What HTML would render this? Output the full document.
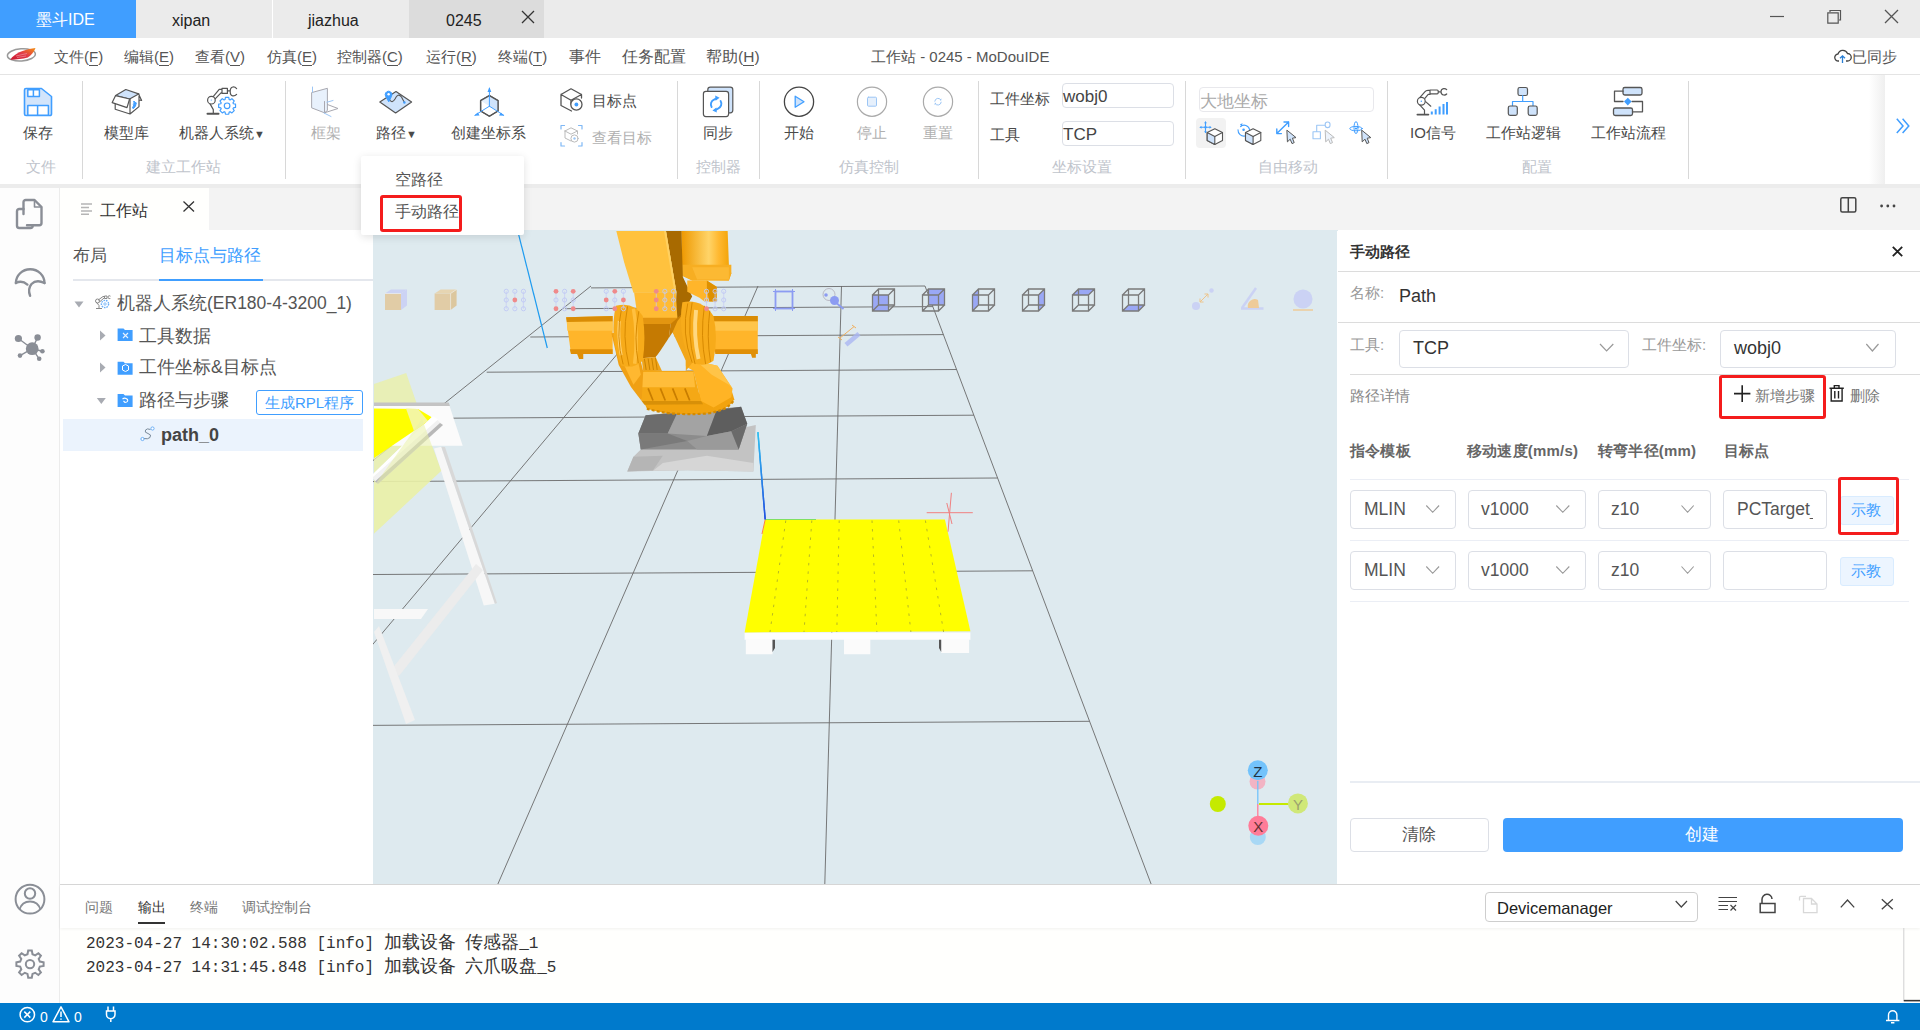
<!DOCTYPE html>
<html><head><meta charset="utf-8">
<style>
*{box-sizing:border-box;margin:0;padding:0}
html,body{width:1920px;height:1030px;overflow:hidden;background:#fff;font-family:"Liberation Sans",sans-serif;color:#303133}
.a{position:absolute}
.t{position:absolute;white-space:nowrap;line-height:1}
svg{position:absolute;overflow:visible}
.sep{position:absolute;top:81px;width:1px;height:98px;background:#d8d8d8}
.gl{top:159px;font-size:15px;color:#c0c4cc}
.tl{top:125px;font-size:15px;color:#4a4a4a}
.inp{border:1px solid #dcdfe6;border-radius:4px;background:#fff}
.lbl{font-size:15px;color:#999}
.sel{border:1px solid #dcdfe6;border-radius:4px;background:#fff}
.th{top:443px;font-size:15px;color:#666;font-weight:bold;letter-spacing:.2px}
.rb{border:3px solid #f41c1c;border-radius:3px}
.bt{top:900px;font-size:14px}
.cj{font-family:"Liberation Sans",sans-serif;font-size:17.6px;letter-spacing:0}
.log{font-family:"Liberation Mono",monospace;font-size:16px;color:#333}
.menu{top:49px;font-size:15px;color:#555}
.menu u{text-decoration:none;border-bottom:1px solid #555}
</style></head><body>
<!-- title bar -->
<div class="a" style="left:0;top:0;width:1920px;height:38px;background:#ebebeb"></div>
<div class="a" style="left:0;top:0;width:136px;height:38px;background:#409eff"></div>
<div class="t" style="left:36px;top:12px;font-size:16px;color:#fff">墨斗IDE</div>
<div class="a" style="left:272px;top:0;width:1px;height:38px;background:#fff"></div>
<div class="t" style="left:172px;top:13px;font-size:16px;color:#222">xipan</div>
<div class="t" style="left:308px;top:13px;font-size:16px;color:#222">jiazhua</div>
<div class="a" style="left:409px;top:0;width:135px;height:38px;background:#dcdcdc"></div>
<div class="t" style="left:446px;top:13px;font-size:16px;color:#222">0245</div>

<!-- menu bar -->
<div class="a" style="left:0;top:38px;width:1920px;height:37px;background:#fff;border-bottom:1px solid #e4e4e4"></div>


<!-- title tabs text + close -->
<svg style="left:521px;top:10px" width="14" height="14"><path d="M1 1L13 13M13 1L1 13" stroke="#333" stroke-width="1.3"/></svg>
<svg style="left:1770px;top:16px" width="14" height="2"><path d="M0 .5H14" stroke="#555" stroke-width="1.2"/></svg>
<svg style="left:1827px;top:9px" width="15" height="15"><path d="M3 3V1.5H13.5V11H12M.8 3.8H11.2V14.2H.8Z" fill="none" stroke="#555" stroke-width="1.2"/></svg>
<svg style="left:1884px;top:9px" width="15" height="15"><path d="M1 1L14 14M14 1L1 14" stroke="#555" stroke-width="1.3"/></svg>
<!-- menu bar -->
<svg style="left:0;top:40px" width="50" height="32" viewBox="0 0 50 32"><defs><linearGradient id="wg" x1="0" x2="1" y1="1" y2="0"><stop offset="0" stop-color="#c8142c"/><stop offset=".5" stop-color="#e23a48"/><stop offset="1" stop-color="#f39010"/></linearGradient></defs><ellipse cx="21.4" cy="14.9" rx="14" ry="6.1" transform="rotate(-4 21.4 14.9)" fill="none" stroke="#9a9a9a" stroke-width="1.5"/><path d="M10.3 19.7C14 13.5 22 10 35.5 7.9C34 12 31 15 27.8 17.6C22 19.2 15 19.8 10.3 19.7Z" fill="url(#wg)"/><path d="M16 16L27 13.5M17 17.5L26 16" stroke="#f4a0a8" stroke-width=".6"/></svg>
<div class="t menu" style="left:54px">文件(<u>F</u>)</div>
<div class="t menu" style="left:124px">编辑(<u>E</u>)</div>
<div class="t menu" style="left:195px">查看(<u>V</u>)</div>
<div class="t menu" style="left:267px">仿真(<u>E</u>)</div>
<div class="t menu" style="left:337px">控制器(<u>C</u>)</div>
<div class="t menu" style="left:426px">运行(<u>R</u>)</div>
<div class="t menu" style="left:498px">终端(<u>T</u>)</div>
<div class="t menu" style="left:569px;font-size:16px;top:48.5px">事件</div>
<div class="t menu" style="left:622px;font-size:16px;top:48.5px">任务配置</div>
<div class="t menu" style="left:706px;font-size:15.5px">帮助(<u>H</u>)</div>
<div class="t menu" style="left:871px">工作站 - 0245 - MoDouIDE</div>
<svg style="left:1834px;top:49px" width="18" height="15" viewBox="0 0 18 15"><path d="M5 12H4.5A3.5 3.5 0 0 1 4 5A5 5 0 0 1 13.5 4.5A3.7 3.7 0 0 1 13.5 12H12" fill="none" stroke="#444" stroke-width="1.3"/><path d="M8.5 14V7M6 9.3L8.5 6.8L11 9.3" fill="none" stroke="#2a7fd4" stroke-width="1.3"/></svg>
<div class="t menu" style="left:1852px">已同步</div>

<!-- toolbar -->
<div class="a" style="left:0;top:75px;width:1920px;height:109px;background:#fff"></div>
<div class="a" style="left:0;top:184px;width:1920px;height:6px;background:#ececec"></div>


<!-- separators -->
<div class="sep" style="left:82px"></div>
<div class="sep" style="left:285px"></div>
<div class="sep" style="left:677px"></div>
<div class="sep" style="left:759px"></div>
<div class="sep" style="left:978px"></div>
<div class="sep" style="left:1185px"></div>
<div class="sep" style="left:1387px"></div>
<div class="sep" style="left:1688px"></div>
<!-- group labels -->
<div class="t gl" style="left:26px">文件</div>
<div class="t gl" style="left:146px">建立工作站</div>
<div class="t gl" style="left:696px">控制器</div>
<div class="t gl" style="left:839px">仿真控制</div>
<div class="t gl" style="left:1052px">坐标设置</div>
<div class="t gl" style="left:1258px">自由移动</div>
<div class="t gl" style="left:1522px">配置</div>
<!-- labels -->
<div class="t tl" style="left:23px">保存</div>
<div class="t tl" style="left:104px">模型库</div>
<div class="t tl" style="left:179px">机器人系统<span style="font-size:11px">▼</span></div>
<div class="t tl" style="left:311px;color:#b0b0b0">框架</div>
<div class="t tl" style="left:376px">路径<span style="font-size:11px">▼</span></div>
<div class="t tl" style="left:451px">创建坐标系</div>
<div class="t tl" style="left:592px;top:93px">目标点</div>
<div class="t tl" style="left:592px;top:130px;color:#b0b0b0">查看目标</div>
<div class="t tl" style="left:703px">同步</div>
<div class="t tl" style="left:784px">开始</div>
<div class="t tl" style="left:857px;color:#b0b0b0">停止</div>
<div class="t tl" style="left:923px;color:#b0b0b0">重置</div>
<div class="t tl" style="left:990px;top:91px">工件坐标</div>
<div class="t tl" style="left:990px;top:127px">工具</div>
<div class="a inp" style="left:1062px;top:83px;width:112px;height:25px"></div>
<div class="t" style="left:1063px;top:88px;font-size:17px;color:#444">wobj0</div>
<div class="a inp" style="left:1062px;top:121px;width:112px;height:25px"></div>
<div class="t" style="left:1063px;top:126px;font-size:17px;color:#444">TCP</div>
<div class="a inp" style="left:1199px;top:87px;width:175px;height:25px;border-color:#e8e8ec"></div>
<div class="t" style="left:1200px;top:93px;font-size:17px;color:#aaa">大地坐标</div>
<div class="a" style="left:1196px;top:118px;width:30px;height:30px;background:#f2f2f2;border-radius:4px"></div>
<div class="t tl" style="left:1410px">IO信号</div>
<div class="t tl" style="left:1486px">工作站逻辑</div>
<div class="t tl" style="left:1591px">工作站流程</div>
<div class="a" style="left:1869px;top:75px;width:16px;height:109px;background:linear-gradient(to right,rgba(240,240,240,0),#efefef)"></div><div class="a" style="left:1885px;top:75px;width:35px;height:109px;background:#fff"></div>
<svg style="left:1896px;top:118px" width="14" height="16" viewBox="0 0 14 16"><path d="M.8 .8L7 7.9L.8 15M6.6 .8L12.8 7.9L6.6 15" fill="none" stroke="#409eff" stroke-width="1.5"/></svg>


<!-- toolbar icons -->
<svg style="left:0;top:0" width="1920" height="190">
<g stroke-linejoin="round" stroke-linecap="round">
<!-- save -->
<path d="M24.5 90A1.5 1.5 0 0 1 26 88.5H41.5L51.5 96.5V114A1.5 1.5 0 0 1 50 115.5H26A1.5 1.5 0 0 1 24.5 114Z" fill="#d3e5fb" stroke="#409eff" stroke-width="1.6"/>
<path d="M27.8 89.8H39.4V96.4H27.8ZM33.4 89.8V96.4M27.8 105.6H48.4V115.3H27.8ZM37.6 105.6V115.3" fill="#fff" stroke="#409eff" stroke-width="1.5"/>
<!-- model lib box -->
<path d="M115.6 95.6L125.8 89.5L138.6 93.9L129.6 99Z" fill="#cfe3fb" stroke="#555" stroke-width="1.2"/>
<path d="M115.6 95.6L112.2 102.6L127 107.6L129.6 99Z" fill="#fff" stroke="#555" stroke-width="1.2"/>
<path d="M115.2 104V109.2L130 114L139 106.6V94M130 114V99M138.6 93.9L141.6 100.5L139 100" fill="none" stroke="#555" stroke-width="1.2"/>
<path d="M134 101.5Q137 102 135.5 106Q133 110 132.5 108Q135 104 134 101.5ZM133.2 104.2L136.5 103.2" fill="#409eff" stroke="#409eff" stroke-width="1"/>
<!-- robot system -->
<path d="M207.5 113.8H218.5" stroke="#555" stroke-width="2"/>
<path d="M213.3 113V109.6L209.8 103.4M213 96.8L219.2 89.3H222M214.9 99.2L221 92.8H222M222 88.3H227.4V93.4H222ZM227.4 90.9H229.8M236.6 88.6Q235 86.7 232.8 87Q230.2 87.5 230.2 91.4Q230.2 95.4 232.8 95.9Q235 96.2 236.6 94.4" fill="none" stroke="#555" stroke-width="1.2"/>
<circle cx="211.4" cy="100.2" r="3.8" fill="#fff" stroke="#555" stroke-width="1.2"/>
<circle cx="211.3" cy="100" r=".6" fill="#409eff"/>
<path d="M233.36 103.72L235.54 104.16L235.54 107.44L233.36 107.88L233.00 108.76L234.23 110.61L231.91 112.93L230.06 111.70L229.18 112.06L228.74 114.24L225.46 114.24L225.02 112.06L224.14 111.70L222.29 112.93L219.97 110.61L221.20 108.76L220.84 107.88L218.66 107.44L218.66 104.16L220.84 103.72L221.20 102.84L219.97 100.99L222.29 98.67L224.14 99.90L225.02 99.54L225.46 97.36L228.74 97.36L229.18 99.54L230.06 99.90L231.91 98.67L234.23 100.99L233.00 102.84Z" fill="#fff" stroke="#409eff" stroke-width="1.2"/>
<circle cx="227.1" cy="105.8" r="2.8" fill="none" stroke="#409eff" stroke-width="1.2"/>
<!-- frame (disabled) -->
<path d="M312 92.5L327.4 88.3V110.5L324.5 112.8L312 108Z" fill="#e8f1fc" stroke="#a8a8b0" stroke-width="1"/>
<path d="M324.5 101.5V112.8L338 108.5L327.4 104.5" fill="none" stroke="#a8a8b0" stroke-width="1"/>
<path d="M312.5 87V92M327 102.2L333 100.5M324 113L331 116.5" stroke="#9cc6f5" stroke-width="1"/>
<!-- path icon -->
<path d="M379.8 102L396 91.5L411.6 102L395.6 113Z" fill="#cfe3fb" stroke="#555" stroke-width="1.2"/>
<path d="M389.5 99.5Q392 104 395 99Q398 92.5 401.5 97Q403 100 404.4 102.3" fill="none" stroke="#555" stroke-width="1.1"/>
<circle cx="404.4" cy="102.5" r="1.2" fill="#409eff"/>
<path d="M388.6 101.5L385.6 96.2A3.4 3.4 0 1 1 391.6 96.2Z" fill="#409eff" stroke="#409eff" stroke-width="1"/>
<circle cx="388.6" cy="94.3" r="1.2" fill="#fff"/>
<!-- create coord -->
<path d="M489.4 95.6L498 100.6V111L489.4 116.2L480.6 111V100.6Z" fill="#fff" stroke="#555" stroke-width="1.3"/>
<path d="M489.4 95.6L498 100.6V111L489.4 106.2Z" fill="#cfe3fb"/>
<path d="M480.6 100.6L489.4 106.2V95.6Z" fill="#e3effd"/>
<path d="M489.4 95.6L498 100.6V111L489.4 116.2L480.6 111V100.6Z" fill="none" stroke="#555" stroke-width="1.3"/>
<path d="M489.4 106.2V88.5M489.4 106.2L475 115.2M489.4 106.2L503.6 115.2" stroke="#409eff" stroke-width="1"/>
<path d="M489.4 87L487.5 92H491.3ZM474.2 115.8L479.6 115.4L477.8 112.4ZM504.4 115.8L499 115.4L500.8 112.4Z" fill="#409eff"/>
<!-- target point -->
<path d="M561 94.5L571 88.8L581.5 94.5V98M561 94.5V105.5L571.5 111M561 94.5L571 100.2L581.5 94.5M571 100.2V104" fill="none" stroke="#555" stroke-width="1.3"/>
<circle cx="576.4" cy="104.5" r="5.6" fill="#fff" stroke="#555" stroke-width="1.3"/>
<circle cx="576.4" cy="104.5" r="1.9" fill="#409eff"/>
<!-- view target -->
<path d="M561 129V125.5H564.5M578.5 125.5H582V129M582 142.5V146H578.5M564.5 146H561V142.5" fill="none" stroke="#7fb8f5" stroke-width="1.2"/>
<path d="M565 131L571 127.8L577.5 131V134M565 131V138L571 141M565 131L571 134.2L577.5 131" fill="none" stroke="#bbb" stroke-width="1"/>
<circle cx="574.5" cy="138.5" r="3.6" fill="#fff" stroke="#bbb" stroke-width="1"/>
<circle cx="574.5" cy="138.5" r="1.2" fill="#9cc6f5"/>
<!-- sync -->
<rect x="707.8" y="87.2" width="25" height="25.6" rx="2.5" fill="#cfe3fb" stroke="#555" stroke-width="1.2"/>
<rect x="703.4" y="91.4" width="25.2" height="25.2" rx="2.5" fill="#fff" stroke="#555" stroke-width="1.2"/>
<path d="M711.6 107A5.2 5.2 0 0 1 714 99.6L716.5 98.4M720.6 101A5.2 5.2 0 0 1 718 108.6L715.6 109.8" fill="none" stroke="#409eff" stroke-width="1.9"/>
<path d="M719.6 97.8L715.2 95.6L715.6 100.8ZM712.4 110.4L716.8 112.6L716.4 107.4Z" fill="#409eff"/>
<!-- start -->
<circle cx="799" cy="101.7" r="14.6" fill="#fff" stroke="#444" stroke-width="1.3"/>
<path d="M795.2 96.2L804 101.7L795.2 107.2Z" fill="#cfe3fb" stroke="#409eff" stroke-width="1.3"/>
<!-- stop -->
<circle cx="872" cy="101.7" r="14.6" fill="#fff" stroke="#aaa" stroke-width="1.2"/>
<rect x="867.5" y="97.2" width="9" height="9" rx="1" fill="#e6f0fc" stroke="#9cc6f5" stroke-width="1"/>
<!-- reset -->
<circle cx="938" cy="101.7" r="14.6" fill="#fff" stroke="#aaa" stroke-width="1.2"/>
<path d="M934.8 101.2A3.3 3.3 0 0 1 940.8 99.8M941.2 102.2A3.3 3.3 0 0 1 935.2 103.6" fill="none" stroke="#9cc6f5" stroke-width="1"/>
<path d="M941.6 98.5L941 101L939.6 99.6ZM934.4 104.9L935 102.4L936.4 103.8Z" fill="#9cc6f5"/>
<!-- free move icons -->
<path d="M1200.3 127.3H1210.7M1205.5 122.1V132.5" fill="none" stroke="#409eff" stroke-width="1.1"/>
<path d="M1205.5 121.3L1204.1 123.3H1206.9ZM1205.5 133.3L1204.1 131.3H1206.9ZM1199.5 127.3L1201.5 125.9V128.7ZM1211.5 127.3L1209.5 125.9V128.7Z" fill="#409eff"/>
<circle cx="1205.5" cy="127.3" r="1.2" fill="#409eff"/>
<path d="M1207.2 132.6L1214.8 128.8L1222.5 132.6V140.6L1214.8 144.4L1207.2 140.6Z" fill="#fff" stroke="#555" stroke-width="1.1"/>
<path d="M1207.2 132.6L1214.8 136.6V144.4L1207.2 140.6Z" fill="#cfe3fb" stroke="#555" stroke-width="1.1"/>
<path d="M1214.8 136.6L1222.5 132.6" stroke="#555" stroke-width="1.1"/>
<path d="M1240.5 126.6A5.5 5.5 0 0 1 1249.6 129.6M1238 129.8A6 6 0 0 0 1245 136" fill="none" stroke="#409eff" stroke-width="1.1"/>
<circle cx="1243.6" cy="129.75" r="1.3" fill="#409eff"/>
<path d="M1240 124.2L1242.6 123.2L1241.6 126.8Z" fill="#409eff"/>
<path d="M1245.5 132.6L1253.1 128.8L1260.8 132.6V140.6L1253.1 144.4L1245.5 140.6Z" fill="#fff" stroke="#555" stroke-width="1.1"/>
<path d="M1245.5 132.6L1253.1 136.6V144.4L1245.5 140.6Z" fill="#cfe3fb" stroke="#555" stroke-width="1.1"/>
<path d="M1253.1 136.6L1260.8 132.6" stroke="#555" stroke-width="1.1"/>
<path d="M1276.8 133.6L1288.6 122M1276.8 133.6V129M1276.8 133.6H1281.4M1288.6 122H1284M1288.6 122V126.6" fill="none" stroke="#409eff" stroke-width="1.4"/>
<path d="M1287.2 130.4L1296 137.6L1292.4 138.2L1294.2 142.6L1292 143.6L1290.2 139.2L1287.7 141.6Z" fill="#cfe3fb" stroke="#555" stroke-width="1"/>
<path d="M1316.7 131.8V125.3H1325.2M1313 131.8H1320.4V138.8H1313Z" fill="none" stroke="#9cc6f5" stroke-width="1.1"/>
<rect x="1325.2" y="122" width="4.8" height="5.6" rx="2.3" fill="#fff" stroke="#9cc6f5" stroke-width="1.1"/>
<path d="M1325.5 130.4L1334.3 137.6L1330.7 138.2L1332.5 142.6L1330.3 143.6L1328.5 139.2L1326 141.6Z" fill="#eef4fc" stroke="#bbb" stroke-width="1"/>
<ellipse cx="1356" cy="128.6" rx="6.2" ry="2.2" fill="none" stroke="#409eff" stroke-width="1"/>
<ellipse cx="1356" cy="127.6" rx="2" ry="6" fill="none" stroke="#409eff" stroke-width="1"/>
<circle cx="1356" cy="128.6" r="1.1" fill="#409eff"/>
<path d="M1362 130.4L1370.8 137.6L1367.2 138.2L1369 142.6L1366.8 143.6L1365 139.2L1362.5 141.6Z" fill="#cfe3fb" stroke="#555" stroke-width="1"/>
<!-- IO signal -->
<path d="M1417.4 114.6H1428.4" stroke="#555" stroke-width="1.8"/>
<path d="M1424.5 114V110.2L1419.5 104.6M1419.8 97.6L1424.8 91.8Q1426 90.4 1428 90.4H1430M1423.2 100.4L1428.2 94.4H1430M1430 90H1437.2Q1438.2 90 1438.2 91V92.8Q1438.2 93.8 1437.2 93.8H1430ZM1438.2 91.9H1440M1446.7 89.6Q1445.6 88.4 1443.6 88.6Q1441 89 1441 91.8Q1441 94.6 1443.6 95Q1445.6 95.2 1446.7 94M1425.6 101.6L1430.8 106.2" fill="none" stroke="#555" stroke-width="1.2"/>
<circle cx="1421.3" cy="101.2" r="3.9" fill="#fff" stroke="#555" stroke-width="1.2"/>
<circle cx="1421.3" cy="101.2" r=".7" fill="#409eff"/>
<path d="M1431.8 111.6V114.6M1435.7 109.2V114.6M1439.6 106.6V114.6M1443.5 104V114.6M1447 102V114.6" stroke="#409eff" stroke-width="2" stroke-linecap="butt"/>
<!-- station logic -->
<rect x="1518" y="87.5" width="9.5" height="8" rx="1.8" fill="#cfe3fb" stroke="#555" stroke-width="1.2"/>
<path d="M1522.7 95.5V101.5M1512.5 106V101.5H1533V106" fill="none" stroke="#409eff" stroke-width="1.2"/>
<rect x="1508.3" y="106" width="9" height="9.3" rx="1.8" fill="#cfe3fb" stroke="#555" stroke-width="1.2"/>
<rect x="1528.2" y="106" width="9" height="9.3" rx="1.8" fill="#cfe3fb" stroke="#555" stroke-width="1.2"/>
<!-- station flow -->
<rect x="1623" y="87.5" width="19" height="7.5" rx="1.8" fill="#cfe3fb" stroke="#555" stroke-width="1.3"/>
<rect x="1613.5" y="108" width="19" height="7.5" rx="1.8" fill="#cfe3fb" stroke="#555" stroke-width="1.3"/>
<path d="M1623 91.2H1614.5V101.5H1623M1632.5 111.8H1642.5V101.5H1632" fill="none" stroke="#555" stroke-width="1.3"/>
<path d="M1627.8 97.8L1631.6 101.6L1627.8 105.4L1624 101.6Z" fill="#409eff"/>
</g></svg>

<!-- activity bar -->
<div class="a" style="left:0;top:188px;width:60px;height:815px;background:#fdfdfd;border-right:1px solid #ececec"></div>
<svg style="left:0;top:188px" width="60" height="815">
<g fill="none" stroke="#8a8e96" stroke-width="2.4" stroke-linejoin="round" stroke-linecap="round">
<path d="M23.5 26V14.2A2.2 2.2 0 0 1 25.7 12H34.5L41.5 19V35A2.2 2.2 0 0 1 39.3 37.2H27"/>
<path d="M34.5 12V19H41.5" stroke-width="1.6"/>
<path d="M23.5 21H19.2A2.2 2.2 0 0 0 17 23.2V37.8A2.2 2.2 0 0 0 19.2 40H30.5A2.2 2.2 0 0 0 32.7 37.8V37.2"/>
<path d="M15.9 95A14.3 13.8 0 0 1 44.5 95"/>
<path d="M15.9 95Q22 92 27.4 96.6"/>
<path d="M44.5 95Q36.5 91 31.5 96Q27.5 101 30.1 107.8"/>
</g>
<g fill="#8a8e96" stroke="#8a8e96" stroke-width="1.4">
<circle cx="32.2" cy="160.7" r="6.4" stroke="none"/>
<path d="M32.2 160.7L18.4 150.5M32.2 160.7L37.6 149.5M32.2 160.7L42.4 163.3M32.2 160.7L20 167.6M32.2 160.7L39.2 170.8" fill="none"/>
<circle cx="18.4" cy="150.5" r="3.6" stroke="none"/><circle cx="37.6" cy="149.5" r="3.2" stroke="none"/><circle cx="42.4" cy="163.3" r="2.3" stroke="none"/><circle cx="20" cy="167.6" r="2.3" stroke="none"/><circle cx="39.2" cy="170.8" r="2.3" stroke="none"/>
</g>
<g fill="none" stroke="#8a8e96" stroke-width="2">
<circle cx="30" cy="711.2" r="14.4"/>
<circle cx="30" cy="705.5" r="5.2"/>
<path d="M19.5 721.5Q22 713.5 30 713.5Q38 713.5 40.5 721.5"/>
<path transform="translate(0 2)" d="M28.2 760.5H31.8L32.5 764.3L35.2 765.4L38.4 763.2L40.9 765.7L38.7 768.9L39.8 771.6L43.6 772.3V775.9L39.8 776.6L38.7 779.3L40.9 782.5L38.4 785L35.2 782.8L32.5 783.9L31.8 787.7H28.2L27.5 783.9L24.8 782.8L21.6 785L19.1 782.5L21.3 779.3L20.2 776.6L16.4 775.9V772.3L20.2 771.6L21.3 768.9L19.1 765.7L21.6 763.2L24.8 765.4L27.5 764.3Z"/>
<circle cx="30" cy="776.1" r="4.2"/>
</g>
</svg>

<!-- editor tabs -->
<div class="a" style="left:60px;top:188px;width:1860px;height:42px;background:#f3f3f3"></div>
<div class="a" style="left:60px;top:188px;width:149px;height:42px;background:#fffffd"></div>
<svg style="left:81px;top:203px" width="12" height="12"><path d="M0 1H11M0 4.5H8M0 8H11M0 11.2H8" stroke="#b5b5b5" stroke-width="1.5"/></svg>
<div class="t" style="left:100px;top:203px;font-size:16px;color:#333">工作站</div>
<svg style="left:183px;top:201px" width="12" height="11"><path d="M.5 .5L11 10.5M11 .5L.5 10.5" stroke="#333" stroke-width="1.3"/></svg>
<svg style="left:1840px;top:197px" width="17" height="16"><rect x=".8" y=".8" width="15" height="14.2" rx="1.5" fill="none" stroke="#444" stroke-width="1.5"/><path d="M8.3 1V15" stroke="#444" stroke-width="1.5"/></svg>
<svg style="left:1880px;top:204px" width="16" height="4"><circle cx="1.6" cy="2" r="1.4" fill="#444"/><circle cx="7.8" cy="2" r="1.4" fill="#444"/><circle cx="14" cy="2" r="1.4" fill="#444"/></svg>

<!-- left panel -->
<div class="a" style="left:60px;top:230px;width:313px;height:654px;background:#fff"></div>
<div class="t" style="left:73px;top:247px;font-size:17px;color:#555">布局</div>
<div class="t" style="left:159px;top:247px;font-size:17px;color:#409eff">目标点与路径</div>
<div class="a" style="left:73px;top:279px;width:300px;height:2px;background:#e4e7ed"></div>
<div class="a" style="left:159px;top:279px;width:104px;height:2px;background:#409eff"></div>
<div class="a" style="left:63px;top:419px;width:300px;height:32px;background:#ebf3fd"></div>
<svg style="left:0;top:0" width="380" height="460">
<path d="M74.5 301.5H83.5L79 307.5Z" fill="#a8abb2"/>
<path d="M100 330.5V340.5L105.5 335.5Z" fill="#a8abb2"/>
<path d="M100 362.5V372.5L105.5 367.5Z" fill="#a8abb2"/>
<path d="M96.8 398H105.8L101.3 404Z" fill="#a8abb2"/>
<g fill="none" stroke="#888" stroke-width="1">
<path d="M96 308.5H102M99 308V305.5L96.2 302M98 300.2L103 296.5H105M99.5 302L104 298M104.5 296H107V298.5H104.5ZM110.5 296.2Q109 295 108 296.5Q107.5 298 109 298.5Q110 299 110.5 298"/>
<circle cx="97.5" cy="301" r="2"/>
</g>
<circle cx="105" cy="304" r="3.6" fill="none" stroke="#6aaef7" stroke-width="1.4" stroke-dasharray="1.6 .9"/>
<circle cx="105" cy="304" r="1.2" fill="none" stroke="#6aaef7" stroke-width=".8"/>
<g fill="#409eff">
<path d="M117.6 328.5H123.5L125 330H132.6V341H117.6Z"/>
<path d="M117.6 361.8H123.5L125 363.3H132.6V374.7H117.6Z"/>
<path d="M117.6 394H123.5L125 395.5H132.6V407H117.6Z"/>
</g>
<path d="M123 333L128 338M128 333L123 338" stroke="#e8f2ff" stroke-width="1.1"/>
<path d="M122.5 366L125.5 364.5L128.5 366V370L125.5 371.5L122.5 370Z" fill="none" stroke="#fff" stroke-width="1"/>
<path d="M122.5 399Q125 397 127.5 399.5Q128.5 402 125 402.5L123.5 401" fill="none" stroke="#fff" stroke-width="1.1"/>
<path d="M150.5 429.5Q147 428 145.5 430Q144 432.5 148 433.5Q152 434.5 150 437.5Q148 439.5 143.5 438.5" fill="none" stroke="#7a8a9a" stroke-width="1"/>
<circle cx="152.5" cy="428.5" r="1.6" fill="#fff" stroke="#6aaef7" stroke-width="1"/>
<circle cx="142.5" cy="439" r="1.6" fill="#fff" stroke="#6aaef7" stroke-width="1"/>
</svg>
<div class="t" style="left:117px;top:295px;font-size:17.5px;color:#555">机器人系统(ER180-4-3200_1)</div>
<div class="t" style="left:139px;top:327px;font-size:18px;color:#555">工具数据</div>
<div class="t" style="left:139px;top:359px;font-size:17.7px;color:#555">工件坐标&amp;目标点</div>
<div class="t" style="left:139px;top:391px;font-size:18px;color:#555">路径与步骤</div>
<div class="a" style="left:256px;top:390px;width:107px;height:25px;border:1px solid #409eff;border-radius:3px;background:#fff"></div>
<div class="t" style="left:265px;top:395px;font-size:15px;color:#409eff">生成RPL程序</div>
<div class="t" style="left:161px;top:426px;font-size:18px;color:#444;font-weight:bold">path_0</div>

<!-- viewport -->
<svg style="left:373px;top:231px" width="964" height="653" viewBox="373 231 964 653">
<defs><clipPath id="vc"><rect x="373" y="230" width="965" height="654"/></clipPath>
<linearGradient id="cyl" x1="0" x2="1"><stop offset="0" stop-color="#ee9800"/><stop offset=".55" stop-color="#ffd468"/><stop offset=".75" stop-color="#ffb830"/><stop offset="1" stop-color="#f0a000"/></linearGradient>
<linearGradient id="shaft" x1="0" y1="0" x2="0" y2="1"><stop offset="0" stop-color="#ffc445"/><stop offset=".35" stop-color="#ffb425"/><stop offset="1" stop-color="#e8960a"/></linearGradient>
<linearGradient id="zax" x1="0" y1="0" x2="0" y2="1"><stop offset="0" stop-color="#30c0f0"/><stop offset="1" stop-color="#2050e0"/></linearGradient>
</defs>
<g clip-path="url(#vc)">
<rect x="373" y="230" width="965" height="654" fill="#deeaef"/>
<g stroke="#6a6a6a" stroke-width=".9" fill="none">
<path d="M591 286L-155.8 884"/>
<path d="M674.5 286L171.0 884"/>
<path d="M758 286L497.9 884"/>
<path d="M841.5 286L824.8 884"/>
<path d="M925 286L1151.1 884"/>
<path d="M591.0 287.9L925.0 286"/>
<path d="M565.3 308.7L932.8 306.6"/>
<path d="M530.3 337.0L943.4 334.6"/>
<path d="M486.7 372.2L956.6 369.5"/>
<path d="M429.6 418.3L973.9 415.2"/>
<path d="M351.2 481.7L997.6 478"/>
<path d="M235.3 575.3L1032.7 570.8"/>
<path d="M47.4 727.2L1089.6 721.3"/>
</g>
<!-- pallet -->
<path d="M744.6 632.4H970.4V639.7H744.6Z" fill="#fdfdfd"/>
<path d="M745.8 639H772.5V654.3H745.8ZM844 639H870.3V654.3H844ZM941.2 639H969.1V653H941.2Z" fill="#fbfbfb"/>
<path d="M772.5 639.7H775V648L772.5 652ZM941.2 639.7H939V648L941.2 652Z" fill="#555"/>
<path d="M765.2 519.5L944.9 519.5L970.4 631.2L744.6 632.4Z" fill="#ffff00"/>
<g stroke="#9a9a30" stroke-width=".7" stroke-dasharray="2.5 6" fill="none">
<path d="M785.8 520.5L770 632M811.8 520.5L804 632M839.2 520.5L836.8 632M872 520.5L876.9 632M898.7 520.5L910.9 632M925.4 520.5L943.6 632"/>
</g>
<path d="M757.9 432.1L765.2 519.5" stroke="url(#zax)" stroke-width="1.4"/>
<path d="M765.2 519.5H816" stroke="#80e060" stroke-width="1"/>
<path d="M765.2 519.5L762 534" stroke="#ff8040" stroke-width="1"/>
<g stroke="#f08080" stroke-width="1" fill="none">
<path d="M926.7 512.7H972.8M951.4 492.8L948 531.7M946.8 503L952 524"/>
</g>
<!-- table -->
<path d="M374 384L406.2 373L422 419L441.3 470.8L374 533.6Z" fill="#eaf0a8" opacity=".8"/>
<path d="M374 403.6H448.7L462.7 445.7H374Z" fill="#fbfbfb"/>
<path d="M374 402.6H448.7L450 406H374Z" fill="#c4c4c4"/>
<path d="M374 408.5L418 409L433 418L374 458Z" fill="#ffff00"/>
<path d="M406 408.5L418 409L428 421L414 431Z" fill="#f4f6a0"/>
<path d="M433 416L443 425L378 484L371 476Z" fill="#f2f2f2"/>
<path d="M433 416L438 419.5L373 477L371 476Z" fill="#ffffff"/>
<path d="M440 423L443 425L378 484L375 481.5Z" fill="#b8b8b8"/>
<path d="M434 448.6L441.3 446.8L494.9 603.8L483.8 605.6Z" fill="#f7f7f7"/>
<path d="M441.3 446.8L445 447L497 603L494.9 603.8Z" fill="#d8d8d8"/>
<path d="M476 564L483 570L399 676L391 670Z" fill="#ececec"/>
<path d="M374 609H428L421 619H374Z" fill="#f8f8f8"/>
<path d="M374 632L379 626L415 720L406 724Z" fill="#f0f0f0"/>
<path d="M422 419L441.3 470.8L374 533.6V486Z" fill="#eaf0a8" opacity=".55"/>
<!-- blue axis lines -->
<path d="M517.5 230L547.3 348" stroke="#1e9bf0" stroke-width="1.2"/>
<!-- robot base -->
<g transform="translate(560 228) scale(0.24476)">
<path d="M330 905L800 805L790 995L520 990L275 995L300 935Z" fill="#c3c3c3"/>
<path d="M420 960L600 930L790 960L790 995L520 990L380 992Z" fill="#d6d6d6"/>
<path d="M300 935L420 930L380 990L275 995Z" fill="#b5b5b5"/>
<path d="M350 765L740 730L765 800L730 905L330 905L320 840Z" fill="#8c8c8c"/>
<path d="M350 765L480 755L440 840L320 840Z" fill="#6c6c6c"/>
<path d="M480 755L640 745L600 850L440 840Z" fill="#a3a3a3"/>
<path d="M640 745L740 730L765 800L700 830L600 850Z" fill="#5e5e5e"/>
<path d="M320 840L440 840L520 870L330 905Z" fill="#7a7a7a"/>
<path d="M520 870L600 850L700 830L730 905L560 905Z" fill="#9a9a9a"/>
<path d="M700 830L765 800L730 905Z" fill="#6a6a6a"/>
<!-- lower body -->
<path d="M340 705L700 660L712 700Q690 745 600 758Q450 768 355 738Z" fill="#f2a30e"/>
<path d="M355 738Q450 768 600 758Q690 745 712 700" fill="none" stroke="#d48a00" stroke-width="9" stroke-dasharray="12 9"/>
<path d="M472.9 542L555.4 542L643.1 562.8L705 655.6L699.8 691.7L627.6 733L576 707.2L545.1 583.4Z" fill="#ffb425"/>
<path d="M555.4 542L643.1 562.8L705 655.6L690 640L620 600Z" fill="#ffc448"/>
<path d="M307.8 583.4L545.1 583.4L576 707.2L333.6 707.2Z" fill="#f5a815"/>
<path d="M313 588.6L545.1 588.6L552 650.5L328 650.5Z" fill="#ffbd3a"/>
<g stroke="#c87d00" stroke-width="7"><path d="M360 655L380 705M410 655L430 705M460 655L480 705M510 655L530 705"/></g>
<path d="M333.6 707.2L576 707.2L585 720L345 722Z" fill="#d89008"/>
<!-- upper arm -->
<path d="M495 12L685 12L690 150L700 185L690 215L540 215L500 195Z" fill="url(#cyl)"/>
<path d="M500 150L700 150L700 185L690 215L540 215L500 195Z" fill="#f7ae22"/>
<path d="M540 160L690 160L690 210L560 210Z" fill="#ffc040" opacity=".6"/>
<path d="M433 12L496 12L502 200L540 280L490 370L470 370L476 265Z" fill="#a86a00"/>
<path d="M230 12L433 12L476 265L300 265L262 140Z" fill="#ffc23e"/>
<path d="M425 12L433 12L476 265L468 265Z" fill="#ffd060"/>
<path d="M520 215L600 215L640 240L640 300L590 300L570 285L520 260Z" fill="#ffb52a"/>
<path d="M600 215L640 240L640 300L610 300L600 250Z" fill="#de9000"/>
<!-- shafts -->
<path d="M25 365L215 360L215 515L45 515Z" fill="#ffb52a"/>
<path d="M25 365L215 360L215 382L28 384Z" fill="#d98c05"/>
<path d="M28 384L215 382L215 420L30 420Z" fill="#ffc54a"/>
<path d="M40 495L215 495L215 515L45 515Z" fill="#e08f06"/>
<path d="M70 515H95V535H78Z" fill="#e08f06"/>
<path d="M620 360L808 360L808 515L635 515Z" fill="#ffb52a"/>
<path d="M620 360L808 360L808 382L622 382Z" fill="#d98c05"/>
<path d="M622 382L808 382L808 420L624 420Z" fill="#ffc54a"/>
<path d="M632 495L808 495L808 515L635 515Z" fill="#e08f06"/>
<path d="M780 515H800V530H785Z" fill="#e08f06"/>
<!-- middle -->
<path d="M302.7 263.6L472.9 263.6L480 372L318 372Z" fill="#ffbb33"/>
<path d="M318 366.8L478 366.8L480 392.6L320 392.6Z" fill="#e39510"/>
<path d="M333.6 392.6L452.2 392.6L441.9 470L390.4 526.7L333.6 531.8Z" fill="#c57a02"/>
<path d="M452 392L522 330L522 400L465 430L442 470Z" fill="#c97e04"/>
<path d="M460 426L514 542L514 583.4L416 583.4L393 526.7Z" fill="#deeaef"/>
<path d="M333.6 531.8L390.4 526.7L416 583.4L340 585Z" fill="#f0a418"/>
<g stroke="#c98200" stroke-width="4"><path d="M345 535L352 580M360 533L367 580M375 531L382 580M390 530L397 580"/></g>
<path d="M210 430L300 420L340 585L333.6 707.2L290 650L240 560Z" fill="#f0a014"/>
<path d="M250 470L300 450L330 600L300 640L262 560Z" fill="#ffb830"/>
<path d="M460 426L480 380L520 330L545 545L514 583.4L514 542Z" fill="#f2a618"/>
<!-- discs -->
<path d="M228 318Q300 298 338 360Q352 450 338 542Q300 578 250 562Q200 450 228 318Z" fill="#f7ab1a"/>
<path d="M242 380Q236 445 250 520" fill="none" stroke="#ffd070" stroke-width="12"/>
<path d="M300 330Q320 440 305 555" fill="none" stroke="#ffc040" stroke-width="14"/>
<g fill="none" stroke="#d68800" stroke-width="4">
<path d="M252 326Q226 445 258 557M276 320Q252 445 282 563M322 340Q300 450 320 552"/>
</g>
<path d="M500 303Q582 288 627 360Q647 450 627 542Q587 572 535 547Q478 430 500 303Z" fill="#f7ab1a"/>
<path d="M556 335Q544 440 566 535" fill="none" stroke="#ffd880" stroke-width="16"/>
<g fill="none" stroke="#d68800" stroke-width="4">
<path d="M522 308Q494 430 540 550M540 304Q515 430 552 556M590 318Q572 440 595 556M612 338Q598 445 615 547"/>
</g>
</g>
<path d="M757.9 432.1L765.2 519.5" stroke="url(#zax)" stroke-width="1.4"/>
<!-- viewport tool icons -->
<g opacity=".85">
<path d="M385 293.5H401V310H385Z" fill="#e2c79a"/>
<path d="M385 293.5L391 289.5H407L401 293.5Z" fill="#c9cff5"/>
<path d="M401 293.5L407 289.5V305.5L401 310Z" fill="#c9cff5"/>
<path d="M434.6 293.5H450.6V310H434.6Z" fill="#e2c79a"/>
<path d="M434.6 293.5L440.6 289.5H456.6L450.6 293.5Z" fill="#e8d2a8"/>
<path d="M450.6 293.5L456.6 289.5V305.5L450.6 310Z" fill="#dcc291"/>
<path d="M385 293.5H401M450.6 293.5V310M450.6 293.5L456.6 289.5" stroke="#fff" stroke-width=".7" opacity=".6"/>
</g>
<path d="M506.25 291.3V308.75M514.85 291.3V308.75M523.45 291.3V308.75" stroke="#c5ccf5" stroke-width=".7"/><circle cx="506.25" cy="291.3" r="2.1" fill="none" stroke="#c0c8f5" stroke-width=".9"/><circle cx="506.25" cy="300" r="2.1" fill="none" stroke="#c0c8f5" stroke-width=".9"/><circle cx="506.25" cy="308.75" r="2.1" fill="none" stroke="#c0c8f5" stroke-width=".9"/><circle cx="514.85" cy="291.3" r="2.1" fill="none" stroke="#c0c8f5" stroke-width=".9"/><circle cx="514.85" cy="300" r="2.4" fill="#ef8a8a"/><circle cx="514.85" cy="308.75" r="2.1" fill="none" stroke="#c0c8f5" stroke-width=".9"/><circle cx="523.45" cy="291.3" r="2.1" fill="none" stroke="#c0c8f5" stroke-width=".9"/><circle cx="523.45" cy="300" r="2.1" fill="none" stroke="#c0c8f5" stroke-width=".9"/><circle cx="523.45" cy="308.75" r="2.1" fill="none" stroke="#c0c8f5" stroke-width=".9"/><path d="M556 291.3V308.75M564.6 291.3V308.75M573.2 291.3V308.75" stroke="#c5ccf5" stroke-width=".7"/><circle cx="556" cy="291.3" r="2.4" fill="#ef8a8a"/><circle cx="556" cy="300" r="2.1" fill="none" stroke="#c0c8f5" stroke-width=".9"/><circle cx="556" cy="308.75" r="2.4" fill="#ef8a8a"/><circle cx="564.6" cy="291.3" r="2.1" fill="none" stroke="#c0c8f5" stroke-width=".9"/><circle cx="564.6" cy="300" r="2.1" fill="none" stroke="#c0c8f5" stroke-width=".9"/><circle cx="564.6" cy="308.75" r="2.1" fill="none" stroke="#c0c8f5" stroke-width=".9"/><circle cx="573.2" cy="291.3" r="2.4" fill="#ef8a8a"/><circle cx="573.2" cy="300" r="2.1" fill="none" stroke="#c0c8f5" stroke-width=".9"/><circle cx="573.2" cy="308.75" r="2.4" fill="#ef8a8a"/><path d="M606.2 291.3V308.75M614.8000000000001 291.3V308.75M623.4000000000001 291.3V308.75" stroke="#c5ccf5" stroke-width=".7"/><circle cx="606.2" cy="291.3" r="2.1" fill="none" stroke="#c0c8f5" stroke-width=".9"/><circle cx="606.2" cy="300" r="2.4" fill="#ef8a8a"/><circle cx="606.2" cy="308.75" r="2.1" fill="none" stroke="#c0c8f5" stroke-width=".9"/><circle cx="614.8000000000001" cy="291.3" r="2.4" fill="#ef8a8a"/><circle cx="614.8000000000001" cy="300" r="2.1" fill="none" stroke="#c0c8f5" stroke-width=".9"/><circle cx="614.8000000000001" cy="308.75" r="2.4" fill="#ef8a8a"/><circle cx="623.4000000000001" cy="291.3" r="2.1" fill="none" stroke="#c0c8f5" stroke-width=".9"/><circle cx="623.4000000000001" cy="300" r="2.4" fill="#ef8a8a"/><circle cx="623.4000000000001" cy="308.75" r="2.1" fill="none" stroke="#c0c8f5" stroke-width=".9"/><path d="M656.25 291.3V308.75M664.85 291.3V308.75M673.45 291.3V308.75" stroke="#c5ccf5" stroke-width=".7"/><circle cx="656.25" cy="291.3" r="2.4" fill="#ef8a8a"/><circle cx="656.25" cy="300" r="2.4" fill="#ef8a8a"/><circle cx="656.25" cy="308.75" r="2.4" fill="#ef8a8a"/><circle cx="664.85" cy="291.3" r="2.1" fill="none" stroke="#c0c8f5" stroke-width=".9"/><circle cx="664.85" cy="300" r="2.1" fill="none" stroke="#c0c8f5" stroke-width=".9"/><circle cx="664.85" cy="308.75" r="2.1" fill="none" stroke="#c0c8f5" stroke-width=".9"/><circle cx="673.45" cy="291.3" r="2.1" fill="none" stroke="#c0c8f5" stroke-width=".9"/><circle cx="673.45" cy="300" r="2.1" fill="none" stroke="#c0c8f5" stroke-width=".9"/><circle cx="673.45" cy="308.75" r="2.1" fill="none" stroke="#c0c8f5" stroke-width=".9"/><path d="M706.5 291.3V308.75M715.1 291.3V308.75M723.7 291.3V308.75" stroke="#c5ccf5" stroke-width=".7"/><circle cx="706.5" cy="291.3" r="2.1" fill="none" stroke="#c0c8f5" stroke-width=".9"/><circle cx="706.5" cy="300" r="2.1" fill="none" stroke="#c0c8f5" stroke-width=".9"/><circle cx="706.5" cy="308.75" r="2.4" fill="#ef8a8a"/><circle cx="715.1" cy="291.3" r="2.1" fill="none" stroke="#c0c8f5" stroke-width=".9"/><circle cx="715.1" cy="300" r="2.1" fill="none" stroke="#c0c8f5" stroke-width=".9"/><circle cx="715.1" cy="308.75" r="2.1" fill="none" stroke="#c0c8f5" stroke-width=".9"/><circle cx="723.7" cy="291.3" r="2.1" fill="none" stroke="#c0c8f5" stroke-width=".9"/><circle cx="723.7" cy="300" r="2.1" fill="none" stroke="#c0c8f5" stroke-width=".9"/><circle cx="723.7" cy="308.75" r="2.1" fill="none" stroke="#c0c8f5" stroke-width=".9"/>
<g fill="none" stroke="#8c9cf2" stroke-width="1.8">
<rect x="775.5" y="291.5" width="17" height="17"/>
<path d="M773 291.5H795M773 308.5H795M775.5 289V311M792.5 289V311" stroke-width="1"/>
</g>
<circle cx="829" cy="294.5" r="6" fill="none" stroke="#b9b9c4" stroke-width="1"/>
<circle cx="826" cy="295" r="1.8" fill="#8c9cf2"/>
<circle cx="834.5" cy="300.5" r="4.5" fill="#8c9cf2"/>
<path d="M837 303.5L843.5 309" stroke="#8c9cf2" stroke-width="1.8"/>
<path d="M840 338L854 326.6M838 337L842 340M852 325L856 328" stroke="#f0b060" stroke-width="1"/>
<path d="M844.5 343L857.5 332L860.5 335.5L847.5 346.5Z" fill="#aab6f2" opacity=".8"/>
<path d="M872.5 295H888.5V311H872.5Z" fill="#9aa8f5"/><path d="M872.5 295H888.5V311H872.5ZM878.5 289H894.5V305H878.5ZM872.5 295L878.5 289M888.5 295L894.5 289M888.5 311L894.5 305M872.5 311L878.5 305" fill="none" stroke="#7a7a7a" stroke-width="1.3"/><path d="M928.5 289H944.5V305H928.5Z" fill="#9aa8f5"/><path d="M922.5 295H938.5V311H922.5ZM928.5 289H944.5V305H928.5ZM922.5 295L928.5 289M938.5 295L944.5 289M938.5 311L944.5 305M922.5 311L928.5 305" fill="none" stroke="#7a7a7a" stroke-width="1.3"/><path d="M972.5 295L978.5 289V305L972.5 311Z" fill="#9aa8f5"/><path d="M972.5 295H988.5V311H972.5ZM978.5 289H994.5V305H978.5ZM972.5 295L978.5 289M988.5 295L994.5 289M988.5 311L994.5 305M972.5 311L978.5 305" fill="none" stroke="#7a7a7a" stroke-width="1.3"/><path d="M1038.5 295L1044.5 289V305L1038.5 311Z" fill="#9aa8f5"/><path d="M1022.5 295H1038.5V311H1022.5ZM1028.5 289H1044.5V305H1028.5ZM1022.5 295L1028.5 289M1038.5 295L1044.5 289M1038.5 311L1044.5 305M1022.5 311L1028.5 305" fill="none" stroke="#7a7a7a" stroke-width="1.3"/><path d="M1072.5 295L1078.5 289H1094.5L1088.5 295Z" fill="#9aa8f5"/><path d="M1072.5 295H1088.5V311H1072.5ZM1078.5 289H1094.5V305H1078.5ZM1072.5 295L1078.5 289M1088.5 295L1094.5 289M1088.5 311L1094.5 305M1072.5 311L1078.5 305" fill="none" stroke="#7a7a7a" stroke-width="1.3"/><path d="M1122.5 311L1128.5 305H1144.5L1138.5 311Z" fill="#9aa8f5"/><path d="M1122.5 295H1138.5V311H1122.5ZM1128.5 289H1144.5V305H1128.5ZM1122.5 295L1128.5 289M1138.5 295L1144.5 289M1138.5 311L1144.5 305M1122.5 311L1128.5 305" fill="none" stroke="#7a7a7a" stroke-width="1.3"/>
<g opacity=".9">
<circle cx="1196" cy="306" r="4" fill="#c9d0f5"/>
<circle cx="1211.5" cy="290.5" r="2.2" fill="#c9d0f5"/>
<path d="M1200 302L1208 294M1200 298.5V302H1203.5M1208 294H1204.5M1208 294V297.5" stroke="#f0c080" stroke-width="1" fill="none"/>
<path d="M1241 308.5H1263.5" stroke="#c9d0f5" stroke-width="2.5"/>
<path d="M1242 308L1256 288" stroke="#c9d0f5" stroke-width="2.5"/>
<path d="M1248 308A7 7 0 0 1 1258 300L1259 308Z" fill="#f0c890"/>
<circle cx="1303" cy="299" r="9.5" fill="#c9d0f5"/>
<path d="M1293 310H1313" stroke="#f0c890" stroke-width="1.5"/>
</g>
<!-- axes gizmo -->
<circle cx="1257.5" cy="781.5" r="8" fill="#f2b4c4"/>
<circle cx="1257.8" cy="837" r="8" fill="#a8d8f5"/>
<path d="M1257.8 781V804" stroke="#73c3fb" stroke-width="1.3"/>
<path d="M1257.8 804V816" stroke="#ff7c98" stroke-width="1.3"/>
<path d="M1259 804H1289" stroke="#c5ea00" stroke-width="2"/>
<circle cx="1257.8" cy="770.3" r="10" fill="#73c3fb"/>
<circle cx="1258.3" cy="825.8" r="10" fill="#ff7c98"/>
<circle cx="1297.9" cy="803.4" r="10" fill="#d0e878"/>
<circle cx="1217.8" cy="804" r="8" fill="#c5ea00"/>
<text x="1257.8" y="776.5" font-size="15" text-anchor="middle" fill="#234" font-family="Liberation Sans">Z</text>
<text x="1258.3" y="832" font-size="15" text-anchor="middle" fill="#633" font-family="Liberation Sans">X</text>
<text x="1297.9" y="809.5" font-size="15" text-anchor="middle" fill="#9aa070" font-family="Liberation Sans">Y</text>
</g></svg>

<!-- right panel -->
<div class="a" style="left:1337px;top:231px;width:583px;height:653px;background:#fff"></div>
<div class="t" style="left:1350px;top:244px;font-size:15px;color:#333;font-weight:bold">手动路径</div>
<svg style="left:1892px;top:246px" width="11" height="11"><path d="M.8 .8L10.2 10.2M10.2 .8L.8 10.2" stroke="#222" stroke-width="1.8"/></svg>
<div class="a" style="left:1338px;top:271px;width:582px;height:1px;background:#dcdcdc"></div>
<div class="t lbl" style="left:1350px;top:285px">名称:</div>
<div class="t" style="left:1399px;top:287px;font-size:18px;color:#333">Path</div>
<div class="a" style="left:1338px;top:322px;width:582px;height:1px;background:#dcdcdc"></div>
<div class="t lbl" style="left:1350px;top:337px">工具:</div>
<div class="a sel" style="left:1399px;top:330px;width:230px;height:38px"></div>
<div class="t" style="left:1413px;top:339px;font-size:18px;color:#333">TCP</div>
<div class="t lbl" style="left:1642px;top:337px">工件坐标:</div>
<div class="a sel" style="left:1720px;top:330px;width:176px;height:38px"></div>
<div class="t" style="left:1734px;top:339px;font-size:18px;color:#333">wobj0</div>
<div class="a" style="left:1350px;top:374px;width:570px;height:1px;background:#dcdcdc"></div>
<div class="t" style="left:1350px;top:388px;font-size:15px;color:#888">路径详情</div>
<div class="t" style="left:1755px;top:388px;font-size:15px;color:#777">新增步骤</div>
<div class="t" style="left:1850px;top:388px;font-size:15px;color:#777">删除</div>
<svg style="left:0;top:0" width="1920" height="1030">
<path d="M1742.2 385.3V402M1734 393.6H1750.4" stroke="#222" stroke-width="1.6"/>
<path d="M1829.5 388.3H1843.8M1834.3 388V385.6H1839V388M1831.2 388.5V401H1842.1V388.5M1834.8 391V398.5M1838.5 391V398.5" fill="none" stroke="#222" stroke-width="1.4"/>
<path d="M1600 344L1606.6 351L1613.3 344M1866.3 344L1872.4 351L1878.5 344" fill="none" stroke="#999" stroke-width="1.2"/>
</svg>
<div class="t th" style="left:1350px">指令模板</div>
<div class="t th" style="left:1467px">移动速度(mm/s)</div>
<div class="t th" style="left:1598px">转弯半径(mm)</div>
<div class="t th" style="left:1724px">目标点</div>
<div class="a" style="left:1350px;top:479px;width:559px;height:1px;background:#ebeef5"></div>
<div class="a" style="left:1350px;top:540px;width:559px;height:1px;background:#ebeef5"></div>
<div class="a" style="left:1350px;top:601px;width:559px;height:1px;background:#ebeef5"></div>
<div class="a sel" style="left:1350px;top:490px;width:106px;height:39px"></div>
<div class="t" style="left:1364px;top:501px;font-size:17.5px;color:#555">MLIN</div>
<div class="a sel" style="left:1468px;top:490px;width:118px;height:39px"></div>
<div class="t" style="left:1481px;top:501px;font-size:17.5px;color:#555">v1000</div>
<div class="a sel" style="left:1598px;top:490px;width:113px;height:39px"></div>
<div class="t" style="left:1611px;top:501px;font-size:17.5px;color:#555">z10</div>
<div class="a sel" style="left:1723px;top:490px;width:104px;height:39px"></div>
<div class="t" style="left:1737px;top:501px;width:76px;overflow:hidden;font-size:17.5px;color:#555">PCTarget_</div>
<div class="a" style="left:1840px;top:496px;width:54px;height:29px;background:#ecf5ff;border:1px solid #d9ecff;border-radius:3px"></div>
<div class="t" style="left:1851px;top:502px;font-size:15px;color:#409eff">示教</div>
<svg style="left:0;top:0" width="1920" height="1030"><path d="M1426.3 505.5L1432.7 512.3L1439.1 505.5M1556.3 505.5L1562.8 512.3L1569.3 505.5M1681.5 505.5L1687.6 512.3L1693.7 505.5" fill="none" stroke="#999" stroke-width="1.1"/></svg>
<div class="a sel" style="left:1350px;top:551px;width:106px;height:39px"></div>
<div class="t" style="left:1364px;top:562px;font-size:17.5px;color:#555">MLIN</div>
<div class="a sel" style="left:1468px;top:551px;width:118px;height:39px"></div>
<div class="t" style="left:1481px;top:562px;font-size:17.5px;color:#555">v1000</div>
<div class="a sel" style="left:1598px;top:551px;width:113px;height:39px"></div>
<div class="t" style="left:1611px;top:562px;font-size:17.5px;color:#555">z10</div>
<div class="a sel" style="left:1723px;top:551px;width:104px;height:39px"></div>

<div class="a" style="left:1840px;top:557px;width:54px;height:29px;background:#ecf5ff;border:1px solid #d9ecff;border-radius:3px"></div>
<div class="t" style="left:1851px;top:563px;font-size:15px;color:#409eff">示教</div>
<svg style="left:0;top:0" width="1920" height="1030"><path d="M1426.3 566.5L1432.7 573.3L1439.1 566.5M1556.3 566.5L1562.8 573.3L1569.3 566.5M1681.5 566.5L1687.6 573.3L1693.7 566.5" fill="none" stroke="#999" stroke-width="1.1"/></svg>

<div class="a" style="left:1350px;top:781px;width:570px;height:2px;background:#e9edf3"></div>
<div class="a" style="left:1350px;top:818px;width:139px;height:34px;border:1px solid #dcdfe6;border-radius:4px;background:#fff"></div>
<div class="t" style="left:1402px;top:826px;font-size:17px;color:#555">清除</div>
<div class="a" style="left:1503px;top:818px;width:400px;height:34px;border-radius:4px;background:#409eff"></div>
<div class="t" style="left:1685px;top:826px;font-size:17px;color:#fff">创建</div>
<!-- dropdown -->
<div class="a" style="left:361px;top:156px;width:163px;height:79px;background:#fff;border-radius:2px;box-shadow:0 2px 8px rgba(0,0,0,.12)"></div>
<div class="t" style="left:395px;top:172px;font-size:16px;color:#555">空路径</div>
<div class="t" style="left:395px;top:204px;font-size:16px;color:#555">手动路径</div>
<!-- red boxes -->
<div class="a rb" style="left:380px;top:195px;width:82px;height:37px"></div>
<div class="a rb" style="left:1719px;top:375px;width:107px;height:44px"></div>
<div class="a rb" style="left:1838px;top:477px;width:61px;height:58px"></div>

<!-- bottom panel -->
<div class="a" style="left:60px;top:884px;width:1860px;height:119px;background:#fffffd;border-top:1px solid #d8d8d8"></div>
<div class="a" style="left:60px;top:885px;width:1860px;height:43px;background:#fff;box-shadow:0 1px 3px rgba(0,0,0,.06)"></div>
<div class="t bt" style="left:85px;color:#777">问题</div>
<div class="t bt" style="left:138px;color:#333">输出</div>
<div class="a" style="left:138px;top:922px;width:27px;height:2px;background:#333"></div>
<div class="t bt" style="left:190px;color:#777">终端</div>
<div class="t bt" style="left:242px;color:#777">调试控制台</div>
<div class="t log" style="left:86px;top:934px">2023-04-27 14:30:02.588 [info] <span class="cj">加载设备</span> <span class="cj">传感器</span>_1</div>
<div class="t log" style="left:86px;top:958px">2023-04-27 14:31:45.848 [info] <span class="cj">加载设备</span> <span class="cj">六爪吸盘</span>_5</div>
<div class="a" style="left:1485px;top:892px;width:213px;height:30px;border:1px solid #cecece;border-radius:4px;background:#fff"></div>
<div class="t" style="left:1497px;top:900px;font-size:16.5px;color:#222">Devicemanager</div>
<svg style="left:0;top:0" width="1920" height="1030">
<path d="M1675.7 901L1681.3 907L1687 901" fill="none" stroke="#444" stroke-width="1.2"/>
<path d="M1718.5 897.5H1737M1718.5 901.5H1737M1718.5 905.5H1728M1718.5 909.5H1728M1730.5 905L1736 910.5M1736 905L1730.5 910.5" fill="none" stroke="#444" stroke-width="1.2"/>
<path d="M1762 903.5V899.5A5 5 0 0 1 1772 899M1760.2 903.5H1775V912.5H1760.2Z" fill="none" stroke="#444" stroke-width="1.5"/>
<path d="M1803.5 898.5H1811.5L1817 904V912.6H1803.5ZM1811.5 898.5V904H1817M1799.5 900.5V897.6A1.2 1.2 0 0 1 1800.7 896.4H1806" fill="none" stroke="#d8d8d8" stroke-width="1.3"/>
<path d="M1840.8 907.4L1847.5 900L1854.2 907.4" fill="none" stroke="#444" stroke-width="1.3"/>
<path d="M1881.8 899.2L1892.8 909.2M1892.8 899.2L1881.8 909.2" fill="none" stroke="#444" stroke-width="1.3"/>
<path d="M1903.8 928V1001M1903.8 1001H1920" fill="none" stroke="#d0d0d0" stroke-width="1"/>
<path d="M1903.8 1000.6H1920" stroke="#333" stroke-width="1.5"/>
</svg>

<!-- status bar -->
<div class="a" style="left:0;top:1003px;width:1920px;height:27px;background:#007acc"></div>
<svg style="left:0;top:1003px" width="1920" height="27">
<g fill="none" stroke="#fff" stroke-width="1.5">
<circle cx="27.3" cy="11.6" r="7.2"/>
<path d="M24.3 8.6L30.3 14.6M30.3 8.6L24.3 14.6"/>
<path d="M61 3.8L69 18.8H53Z" stroke-linejoin="round"/>
<path d="M61 8.5V14M61 15.5V16.8"/>
<path d="M108 3.5V8M113.5 3.5V8M106.5 8H115V11.5A4.2 4.2 0 0 1 106.5 11.5ZM110.8 15.8V19"/>
<path d="M1888.5 17.5V12A4.2 4.2 0 0 1 1896.9 12V17.5M1886 17.5H1899.4M1891 19.8H1894.4" stroke-width="1.4"/>
</g></svg>
<div class="t" style="left:40px;top:1010px;font-size:14px;color:#fff">0</div>
<div class="t" style="left:74px;top:1010px;font-size:14px;color:#fff">0</div>
</body></html>
